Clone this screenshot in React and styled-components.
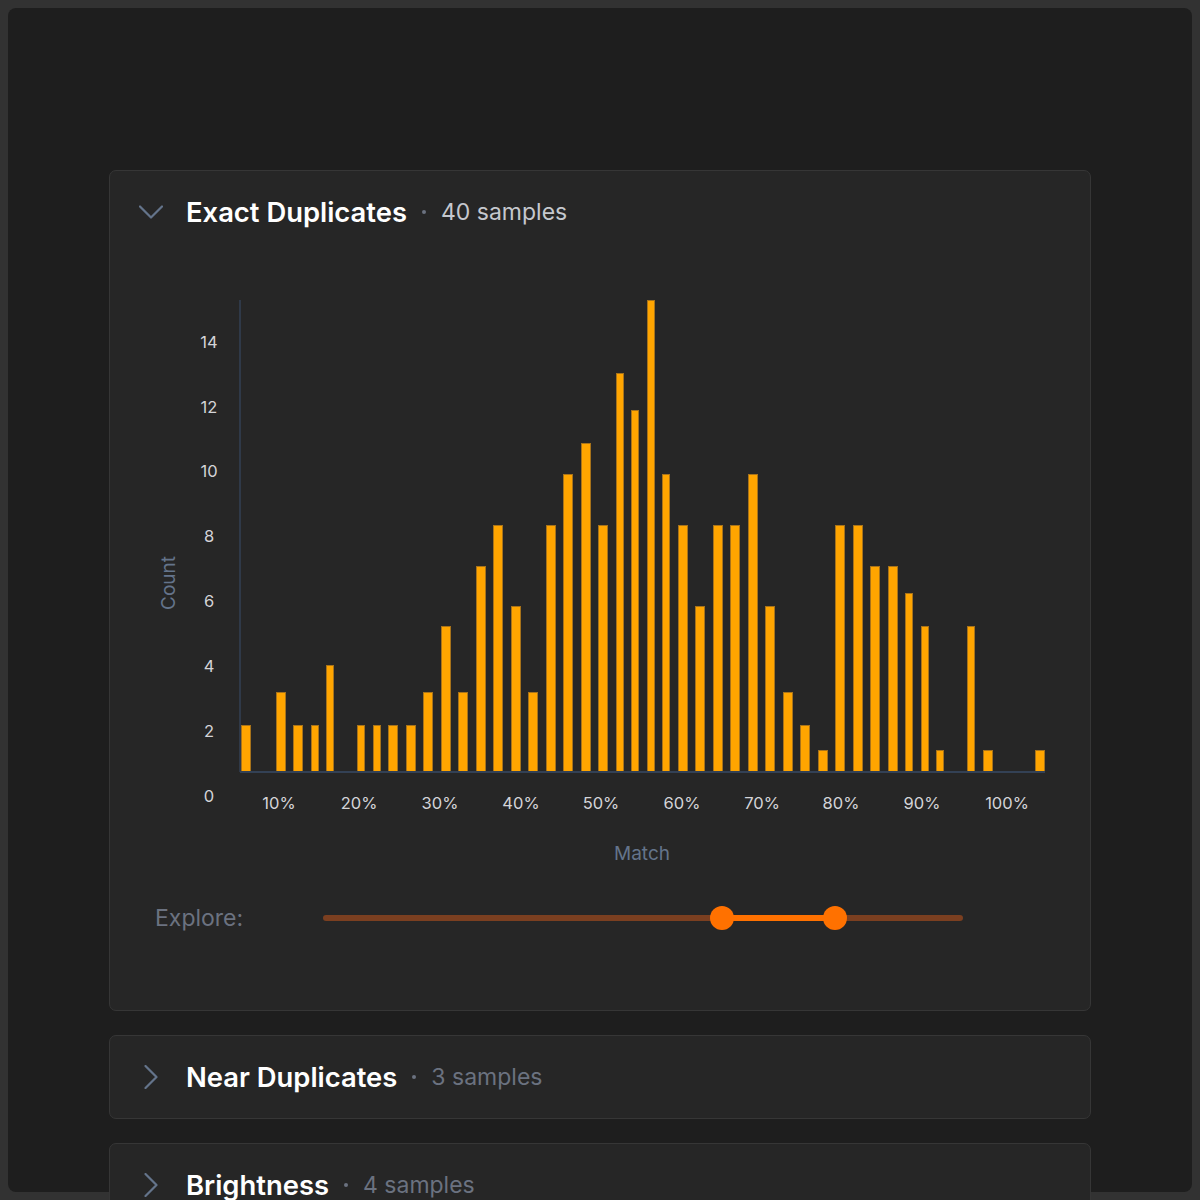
import React from "react";
import styled, { createGlobalStyle } from "styled-components";

const Global = createGlobalStyle`
  html, body { margin: 0; padding: 0; background: #323232; }
  body { font-family: Inter, "Noto Sans", sans-serif; }
`;

const Panel = styled.div`
  margin: 8px;
  height: 1184px;
  box-sizing: border-box;
  background: #1e1e1e;
  border-radius: 8px;
  padding-top: 162px;
`;

const List = styled.div`
  width: 982px;
  margin: 0 auto;
  display: flex;
  flex-direction: column;
  gap: 24px;
`;

const Card = styled.section`
  background: #262626;
  border: 1px solid #363636;
  border-radius: 7px;
  padding-bottom: ${(p) => (p.$open ? "72px" : "0")};
`;

const Header = styled.div`
  display: flex;
  align-items: center;
  height: 82px;
  padding-left: 29px;
`;

const Chevron = styled.svg`
  width: 24px;
  height: 24px;
  margin-right: 23px;
  flex-shrink: 0;
`;

const Title = styled.h2`
  margin: 0;
  font-size: 27.4px;
  font-weight: 600;
  color: #ffffff;
`;

const Dot = styled.span`
  width: 4px;
  height: 4px;
  border-radius: 50%;
  background: #6b7280;
  margin: 0 15px 0 15px;
`;

const Samples = styled.span`
  font-size: 23px;
  color: ${(p) => (p.$open ? "#c5c8ce" : "#6b7280")};
`;

const Chart = styled.svg`
  display: block;
  margin: 33px 0 0 30px;
`;

const SliderRow = styled.div`
  display: flex;
  align-items: center;
  height: 40px;
  margin-top: 22px;
  padding-left: 45px;
`;

const SliderLabel = styled.span`
  width: 168px;
  font-size: 23px;
  color: #6b7280;
`;

const Track = styled.div`
  position: relative;
  width: 640px;
  height: 6px;
  border-radius: 3px;
  background: #7b3f20;
`;

const Range = styled.div`
  position: absolute;
  top: 0;
  height: 6px;
  background: #ff7100;
`;

const Thumb = styled.div`
  position: absolute;
  top: -9px;
  width: 24px;
  height: 24px;
  margin-left: -12px;
  border-radius: 50%;
  background: #ff7100;
`;

const bars = [
  [241, 10, 725], [276, 10, 692], [293, 10, 725], [311, 8, 725], [326, 8, 665],
  [357, 8, 725], [373, 8, 725], [388, 10, 725], [406, 10, 725], [423, 10, 692],
  [441, 10, 626], [458, 10, 692], [476, 10, 566], [493, 10, 525], [511, 10, 606],
  [528, 10, 692], [546, 10, 525], [563, 10, 474], [581, 10, 443], [598, 10, 525],
  [616, 8, 373], [631, 8, 410], [647, 8, 300], [662, 8, 474], [678, 10, 525],
  [695, 10, 606], [713, 10, 525], [730, 10, 525], [748, 10, 474], [765, 10, 606],
  [783, 10, 692], [800, 10, 725], [818, 10, 750], [835, 10, 525], [853, 10, 525],
  [870, 10, 566], [888, 10, 566], [905, 8, 593], [921, 8, 626], [936, 8, 750],
  [967, 8, 626], [983, 10, 750], [1035, 10, 750],
];

const yTicks = [
  [0, 796], [2, 731], [4, 666], [6, 601], [8, 536], [10, 471], [12, 407], [14, 342],
];

const xTicks = [
  ["10%", 279], ["20%", 359], ["30%", 440], ["40%", 521], ["50%", 601],
  ["60%", 682], ["70%", 762], ["80%", 841], ["90%", 922], ["100%", 1007],
];

function ChevronIcon({ open }) {
  return (
    <Chevron viewBox="0 0 24 24" fill="none" stroke="#64748b" strokeWidth="2.2" strokeLinecap="round" strokeLinejoin="round">
      {open ? <path d="M1 6.5 L12 17.5 L23 6.5" /> : <path d="M6.5 1 L17.5 12 L6.5 23" />}
    </Chevron>
  );
}

function Histogram() {
  return (
    <Chart width="920" height="590" viewBox="140 286 920 590">
      <line x1="240" y1="300" x2="240" y2="772" stroke="#334155" strokeWidth="1.5" />
      {bars.map(([x, w, top], i) => (
        <rect key={i} x={x + 0.5} y={top + 0.5} width={w - 1} height={772 - top - 0.5}
          fill="#ffa500" stroke="#a8731a" strokeWidth="1" />
      ))}
      <line x1="240" y1="772" x2="1045" y2="772" stroke="#334155" strokeWidth="2" />
      {yTicks.map(([v, y]) => (
        <text key={v} x="209" y={y} textAnchor="middle" dominantBaseline="central"
          fontFamily="Inter, sans-serif" fontSize="16.5" fill="#d4d4d8">{v}</text>
      ))}
      {xTicks.map(([l, x]) => (
        <text key={l} x={x} y="803" textAnchor="middle" dominantBaseline="central"
          fontFamily="Inter, sans-serif" fontSize="16.5" fill="#d4d4d8">{l}</text>
      ))}
      <text x="168" y="583" transform="rotate(-90 168 583)" textAnchor="middle" dominantBaseline="central"
        fontFamily="Inter, sans-serif" fontSize="19" fill="#64748b">Count</text>
      <text x="642" y="853" textAnchor="middle" dominantBaseline="central"
        fontFamily="Inter, sans-serif" fontSize="19" fill="#64748b">Match</text>
    </Chart>
  );
}

function Explore({ low, high }) {
  return (
    <SliderRow>
      <SliderLabel>Explore:</SliderLabel>
      <Track>
        <Range style={{ left: low, width: high - low }} />
        <Thumb style={{ left: low }} />
        <Thumb style={{ left: high }} />
      </Track>
    </SliderRow>
  );
}

function Section({ title, count, open, children }) {
  return (
    <Card $open={open}>
      <Header>
        <ChevronIcon open={open} />
        <Title>{title}</Title>
        <Dot />
        <Samples $open={open}>{count} samples</Samples>
      </Header>
      {open && children}
    </Card>
  );
}

export default function App() {
  return (
    <>
      <Global />
      <Panel>
        <List>
          <Section title="Exact Duplicates" count={40} open>
            <Histogram />
            <Explore low={399} high={512} />
          </Section>
          <Section title="Near Duplicates" count={3} />
          <Section title="Brightness" count={4} />
        </List>
      </Panel>
    </>
  );
}
